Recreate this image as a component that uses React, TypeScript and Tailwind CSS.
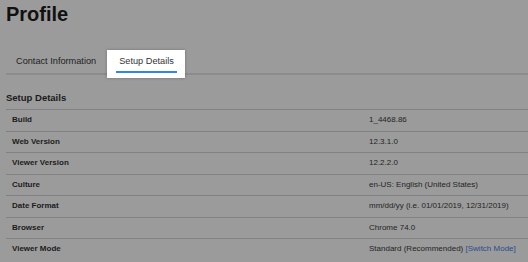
const rows: { label: string; value: string; link?: string }[] = [
  { label: "Build", value: "1_4468.86" },
  { label: "Web Version", value: "12.3.1.0" },
  { label: "Viewer Version", value: "12.2.2.0" },
  { label: "Culture", value: "en-US: English (United States)" },
  { label: "Date Format", value: "mm/dd/yy (i.e. 01/01/2019, 12/31/2019)" },
  { label: "Browser", value: "Chrome 74.0" },
  { label: "Viewer Mode", value: "Standard (Recommended)", link: "[Switch Mode]" },
];

export default function App() {
  return (
    <div className="w-[528px] h-[262px] overflow-hidden bg-[#9b9b9b] pl-[6px] font-['Liberation_Sans',Arial,sans-serif] text-[#1c1c1c]">
      <h1 className="pt-[2px] text-[20px] leading-[24px] font-bold text-[#111]">Profile</h1>

      {/* tabs */}
      <div className="mt-[25px] flex h-[24px] items-start border-b-2 border-[#8c8c8c] pl-[10px] text-[9.2px]">
        <div className="flex h-[22px] items-center text-[#1e1e1e]">Contact Information</div>
        <div className="relative ml-[23px] flex h-[22px] items-center">
          <div className="absolute -left-[12px] -right-[11px] -top-[1px] -bottom-[5px] bg-white shadow-[0_0_3px_rgba(0,0,0,0.25)]" />
          <span className="relative text-[#333]">Setup Details</span>
          <div className="absolute -left-[3px] -right-[3px] top-[20px] h-[2px] bg-[#2f86e8]" />
        </div>
      </div>

      <div className="pt-[17px] pb-[5px] text-[9.5px] leading-[12px] font-bold text-[#1a1a1a]">Setup Details</div>

      <div>
        {rows.map((r) => (
          <div key={r.label} className="flex h-[21.5px] items-center border-t border-[#828282] text-[8px]">
            <div className="w-[363px] pl-[6px] font-bold">{r.label}</div>
            <div className="text-[#242424]">
              {r.value}
              {r.link && <span className="text-[#2a4c8e]"> {r.link}</span>}
            </div>
          </div>
        ))}
      </div>
    </div>
  );
}
